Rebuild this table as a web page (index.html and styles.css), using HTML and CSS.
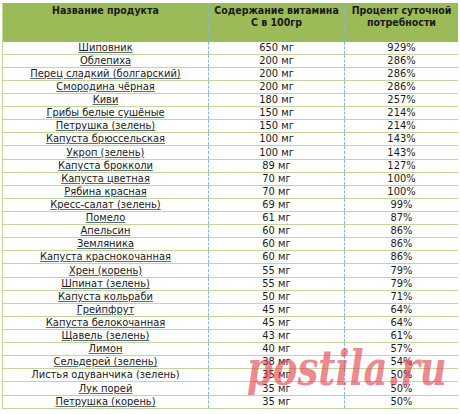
FILE: index.html
```html
<!DOCTYPE html>
<html lang="ru">
<head>
<meta charset="UTF-8">
<title>Витамин C в продуктах</title>
<link rel="stylesheet" href="styles.css">
</head>
<body>
<div class="sheet">
  <table class="vit">
    <thead>
      <tr><th>Название продукта</th><th>Содержание витамина<br>С в 100гр</th><th>Процент суточной потребности</th></tr>
    </thead>
    <tbody id="body"></tbody>
  </table>
  <div class="mark">postila.ru</div>
</div>
<script>
const rows=[
  ['Шиповник',650,929],['Облепиха',200,286],['Перец сладкий (болгарский)',200,286],['Смородина чёрная',200,286],
  ['Киви',180,257],['Грибы белые сушёные',150,214],['Петрушка (зелень)',150,214],['Капуста брюссельская',100,143],
  ['Укроп (зелень)',100,143],['Капуста брокколи',89,127],['Капуста цветная',70,100],['Рябина красная',70,100],
  ['Кресс-салат (зелень)',69,99],['Помело',61,87],['Апельсин',60,86],['Земляника',60,86],
  ['Капуста краснокочанная',60,86],['Хрен (корень)',55,79],['Шпинат (зелень)',55,79],['Капуста кольраби',50,71],
  ['Грейпфрут',45,64],['Капуста белокочанная',45,64],['Щавель (зелень)',43,61],['Лимон',40,57],
  ['Сельдерей (зелень)',38,54],['Листья одуванчика (зелень)',35,50,true],['Лук порей',35,50],['Петрушка (корень)',35,50]
];
const tbody=document.getElementById('body');
rows.forEach(r=>{
  const tr=document.createElement('tr');
  const name=r[3]?r[0]:`<a href="#">${r[0]}</a>`;
  tr.innerHTML=`<td>${name}</td><td>${r[1]} мг</td><td>${r[2]}%</td>`;
  tbody.appendChild(tr);
});
</script>
</body>
</html>
```

FILE: styles.css
```css
:root {
  --head-bg: #9bbb59;
  --grid: #c3d69b;
  --divider: #8db3e2;
  --text: #1a1a1a;
}
body { margin: 0; padding: 3px 0 0 2px; background: #fff; color: var(--text); font-family: 'DejaVu Sans Condensed', 'DejaVu Sans', sans-serif; font-size: 11px; overflow: hidden; }
.sheet { position: relative; width: 456px; }
.vit { width: 456px; border-collapse: collapse; table-layout: fixed; }
.vit th:nth-child(1) { width: 205px; }
.vit th:nth-child(2) { width: 135px; }
.vit th { background: var(--head-bg); height: 38px; padding: 1px 0 0; vertical-align: top; font-weight: bold; font-size: 10.5px; line-height: 12px; text-align: center; }
.vit td { height: 12px; padding: 0; line-height: 12px; text-align: center; border-bottom: 1px solid var(--grid); white-space: nowrap; }
.vit tbody tr:nth-child(9n) td { height: 13px; }
.vit th + th, .vit td + td { border-left: 1px dashed var(--divider); }
.vit tr > :first-child { border-left: 1px solid var(--grid); }
.vit a { color: var(--text); text-decoration: underline; text-decoration-color: #5b6f7a; }
.mark {
  position: absolute; left: 245px; top: 341px;
  font-family: 'DejaVu Serif', serif; font-style: italic; font-weight: bold; font-size: 48px; line-height: 48px;
  color: rgba(222, 60, 70, 0.62); transform: scaleX(0.77); transform-origin: left top;
  white-space: nowrap; pointer-events: none;
}
```
